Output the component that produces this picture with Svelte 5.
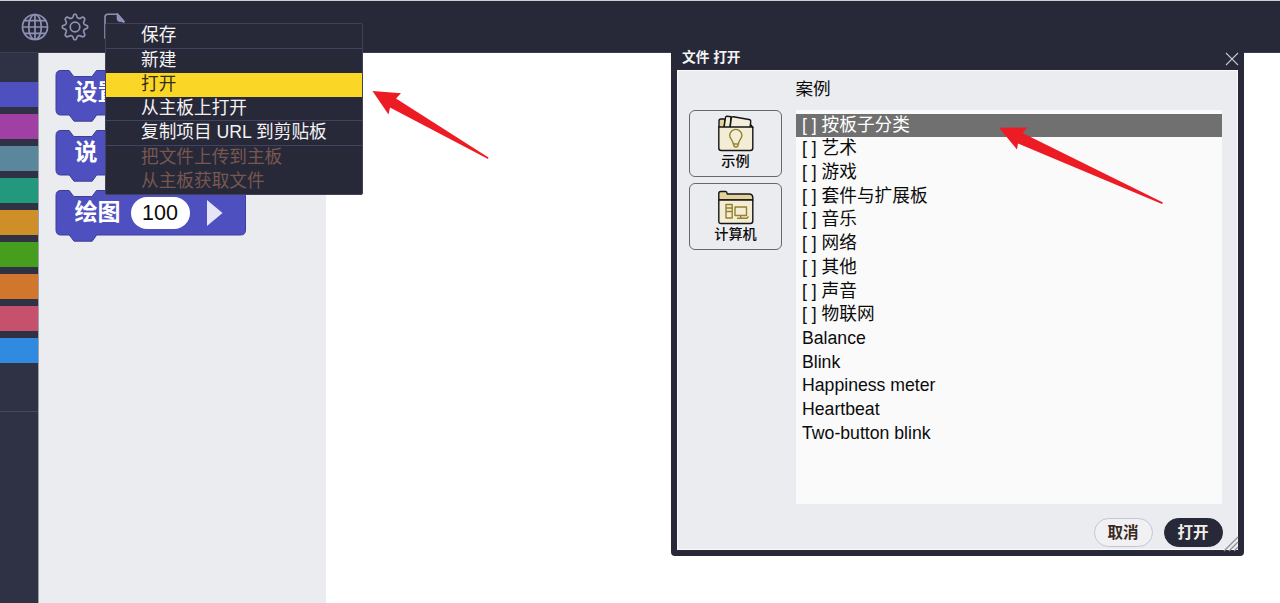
<script>
  const categories = ['#4f50bf', '#a03fa4', '#5a879b', '#22997c', '#ce8f28', '#459e1d', '#d1762d', '#c5516c', '#308adf'];
  const menu = [
    { text: '保存', line: true },
    { text: '新建' },
    { text: '打开', active: true },
    { text: '从主板上打开', line: true },
    { text: '复制项目 URL 到剪贴板', line: true },
    { text: '把文件上传到主板', disabled: true },
    { text: '从主板获取文件', disabled: true }
  ];
  const files = ['按板子分类', '艺术', '游戏', '套件与扩展板', '音乐', '网络', '其他', '声音', '物联网'].map((n) => '[ ] ' + n)
    .concat(['Balance', 'Blink', 'Happiness meter', 'Heartbeat', 'Two-button blink']);
  const blocks = [{ text: '设置' }, { text: '说' }, { text: '绘图', value: '100' }];
</script>

<div class="app">
  <header>
    <svg class="globe" width="28" height="28" viewBox="0 0 28 28" fill="none" stroke="#8e90b4" stroke-width="1.7">
      <circle cx="14" cy="14" r="12.5" /><ellipse cx="14" cy="14" rx="6.3" ry="12.5" />
      <path d="M14 1.5v25M1.5 14h25M3.5 7.7h21M3.5 20.3h21" />
    </svg>
    <svg class="gear" width="28" height="28" viewBox="0 0 28 28" fill="none" stroke="#8e90b4" stroke-width="1.7" stroke-linejoin="round">
      <path d="M14 1.200Q15.500 1.200 15.800 3.200Q16.200 5 17.600 5.300Q18.800 5.700 20.200 4.700Q21.900 3.500 23.200 4.800Q24.500 6.100 23.300 7.800Q22.300 9.200 22.700 10.400Q23 11.800 24.800 12.200Q26.800 12.500 26.800 14Q26.800 15.500 24.800 15.800Q23 16.200 22.700 17.600Q22.300 18.800 23.300 20.200Q24.500 21.900 23.200 23.200Q21.900 24.500 20.200 23.300Q18.800 22.300 17.600 22.700Q16.200 23 15.800 24.800Q15.500 26.800 14 26.800Q12.500 26.800 12.200 24.800Q11.800 23 10.400 22.700Q9.200 22.300 7.800 23.300Q6.100 24.500 4.800 23.200Q3.500 21.900 4.700 20.200Q5.700 18.800 5.300 17.600Q5 16.200 3.200 15.800Q1.200 15.500 1.200 14Q1.200 12.500 3.200 12.200Q5 11.800 5.300 10.400Q5.700 9.200 4.700 7.800Q3.500 6.100 4.800 4.800Q6.100 3.500 7.800 4.700Q9.200 5.700 10.400 5.300Q11.800 5 12.200 3.200Q12.500 1.200 14 1.200z" />
      <circle cx="14" cy="14" r="4.8" />
    </svg>
    <svg class="doc" width="22" height="28" viewBox="0 0 22 28" fill="none" stroke="#8e90b4" stroke-width="1.6">
      <path d="M1 25V4Q1 1.2 4 1.2h9.500l6 6.500V25z" /><path d="M13.500 1.200v4q0 3 3 3h3z" fill="#8e90b4" />
    </svg>
  </header>
  <main>
    <nav>
      {#each categories as color}<i style:background={color}></i>{/each}
      <hr />
    </nav>
    <section class="palette">
      {#each blocks as b}
        <div class="block">
          <svg width="191" height="53" viewBox="0 0 191 53">
            <path d="M6 .5h8.200l4.500 6h18.300L41.500 .5H185.500q5 0 5 5v34.500q0 5-5 5H41.700l-4.500 6.200H19l-4.700-6.200H6q-5 0-5-5v-34.500q0-5 5-5z" fill="#4f50bf" stroke="#3d3e9c" />
          </svg>
          <b>{b.text}</b>
          {#if b.value}
            <span class="value">{b.value}</span>
            <svg class="tri" width="16" height="26" viewBox="0 0 16 26"><path d="M0 0L15.500 13 0 26z" fill="#e5e5f6" /></svg>
          {/if}
        </div>
      {/each}
    </section>
  </main>

  <div class="menu">
    {#each menu as m}
      <div class="item" class:line={m.line} class:active={m.active} class:disabled={m.disabled}>{m.text}</div>
    {/each}
  </div>

  <div class="dialog">
    <div class="title"><b>文件 打开</b>
      <svg width="14" height="14" viewBox="0 0 14 14"><path d="M1 1l12 12M13 1L1 13" stroke="#c4c5d0" stroke-width="1.1" /></svg>
    </div>
    <div class="content">
      <aside>
        <button>
          <svg width="38" height="38" viewBox="0 0 38 38" stroke="#151515" stroke-width="1.4" stroke-linejoin="round">
            <path d="M2 13V6q0-2 2-2h4l-1 9M30 9l4 1 2 3" fill="#e5d29a" />
            <path d="M7 13L8.500 2.500q.2-1.300 1.500-1.200l4 .4-1 11z" fill="#f3eddb" />
            <path d="M13 13l1.300-9.500q.3-2 2-1.700L32 4.500q2 .3 1.700 2.200L33 13z" fill="#f3eddb" />
            <path d="M1.800 12h34v21q0 2.500-2.500 2.500h-29Q1.800 35.500 1.800 33z" fill="#f4edd5" />
            <path d="M16.200 29c0-4-3.500-5.200-3.500-8.500a6.100 6.100 0 0 1 12.200 0c0 3.300-3.400 4.500-3.400 8.500zM16.800 29v2q2.100 2 4.200 0v-2" fill="none" stroke="#95812f" />
          </svg>
          <span>示例</span>
        </button>
        <button>
          <svg width="38" height="38" viewBox="0 0 38 38" stroke="#151515" stroke-width="1.4" stroke-linejoin="round">
            <path d="M1.800 12V5.500q0-2 2-2h5q1 0 1.500 2.500h22q3 0 3.500 3V12z" fill="#e5d29a" />
            <path d="M1.800 12h34v21q0 2.500-2.500 2.500h-29q-2.500 0-2.500-2.500z" fill="#f4edd5" />
            <path d="M9 16.500h6.200v13.500H9zM9 20h6.200M9 23.500h6.200M18 19h11.500v8.500H18zM23.700 27.500V30M20 30.300h10l1.500-2" fill="none" stroke="#95812f" stroke-width="1.4" />
          </svg>
          <span>计算机</span>
        </button>
      </aside>
      <div class="files">
        <h2>案例</h2>
        <div class="list">
          {#each files as f, i}<div class:selected={i === 0}>{f}</div>{/each}
        </div>
        <div class="actions"><button>取消</button><button class="dark">打开</button></div>
      </div>
    </div>
    <svg class="grip" width="16" height="16" viewBox="0 0 16 16"><path d="M1 15L15 1M6 15l9-9M11 15l4-4" stroke="#8d8e96" stroke-width="1.3" /></svg>
  </div>

  <svg class="arrow" style:left="372px" style:top="90px" width="118" height="70" viewBox="0 0 118 70">
    <path d="M.5 1L29 3.200 24 8.500 116.500 67.500 116 69 18 17.500 16.500 24.500z" fill="#ed1c24" />
  </svg>
  <svg class="arrow" style:left="999px" style:top="127px" width="165" height="78" viewBox="0 0 165 78">
    <path d="M0 .8L28.500 .5 23.500 6 164 75.500 163 77 19 16.500 18 22.500z" fill="#ed1c24" />
  </svg>
</div>

<style>
  :global(body) { margin: 0; }
  .app { position: relative; display: flex; flex-direction: column; width: 1280px; height: 603px; overflow: hidden; background: #fff; font-family: "Liberation Sans", "Noto Sans CJK SC", sans-serif; color: #0b0b0b; }
  * { box-sizing: border-box; }
  svg { display: block; flex: none; }
  header { height: 53px; flex: none; display: flex; padding: 12px 0 0 21px; background: #282938; border-top: 1px solid #c8d3cf; border-bottom: 1px solid #3b3c55; }
  .gear { margin-left: 12px; }
  .doc { margin-left: 15px; }
  main { flex: 1; display: flex; }
  nav { width: 39px; background: #2f3144; padding-top: 29px; display: flex; flex-direction: column; gap: 7px; border-right: 1px solid #a0a1ab; }
  nav i { height: 25px; flex: none; }
  nav hr { width: 100%; margin: 41px 0 0; border: 0; border-top: 1px solid #45475b; }
  .palette { width: 287px; background: #ebecf0; padding: 17px 0 0 16px; display: flex; flex-direction: column; gap: 7px; }
  .block { position: relative; width: 191px; height: 53px; display: flex; align-items: flex-start; padding: 7px 0 0 19.500px; color: #fff; }
  .block > svg:first-child { position: absolute; inset: 0; }
  .block b { position: relative; font-size: 23px; line-height: 31px; }
  .value { position: relative; width: 59px; height: 32px; margin-left: 10px; border-radius: 16px; background: #fff; color: #0b0b0b; text-align: center; font-size: 21.500px; line-height: 32px; }
  .tri { position: relative; margin: 3px 0 0 17px; }
  .menu { position: absolute; left: 105px; top: 23px; width: 258px; height: 171.500px; border: 1px solid #41425a; border-radius: 2px; background: #282938; color: #f4f3f4; font-size: 17.660px; }
  .item { height: 24px; line-height: 23px; padding-left: 35px; white-space: pre; }
  .item.line { height: 24.500px; border-bottom: 1px solid #414360; }
  .item.active { background: #fad726; color: #332d20; }
  .item.disabled { color: #775750; }
  .dialog { position: absolute; left: 671px; top: 46px; width: 573px; height: 510px; padding: 0 6px 6px; background: #282938; border-radius: 4px; display: flex; flex-direction: column; }
  .title { height: 24px; display: flex; justify-content: space-between; color: #f4f4f4; font-size: 13.700px; line-height: 23px; padding-left: 5px; }
  .title svg { margin: 5.500px -1px 0 0; }
  .content { flex: 1; display: flex; background: #ebecf0; border: 1px solid #fafafa; padding: 0 15px 0 11px; }
  aside { width: 93.500px; padding-top: 39px; display: flex; flex-direction: column; gap: 6px; }
  button { font: inherit; color: inherit; padding: 0; }
  aside button { width: 93px; height: 67px; border: 1px solid #666870; border-radius: 6px; background: #ebecf0; display: flex; flex-direction: column; align-items: center; font-size: 14.200px; padding-top: 4px; }
  aside span { line-height: 18px; font-weight: 500; margin-top: -1px; }
  .files { margin-left: 13px; flex: 1; display: flex; flex-direction: column; }
  h2 { margin: 0; height: 39px; font-size: 17.600px; font-weight: 400; line-height: 36px; }
  .list { height: 394px; padding-top: 3.500px; background: #fafafa; font-size: 17.660px; line-height: 23px; }
  .list div { height: 23.720px; padding-left: 6.500px; white-space: pre; }
  .list .selected { background: #707070; color: #fff; }
  .actions { display: flex; justify-content: flex-end; gap: 11px; margin: 14px -.5px 0 0; font-size: 15.500px; font-weight: 700; }
  .actions button { width: 59px; height: 29px; border: 1px solid #c5c4d8; border-radius: 15px; background: #f1f1f4; color: #392923; line-height: 26px; }
  .actions .dark { background: #282938; border-color: #282938; color: #f4f0e8; }
  .grip { position: absolute; right: 5px; bottom: 4px; }
  .arrow { position: absolute; }
</style>
